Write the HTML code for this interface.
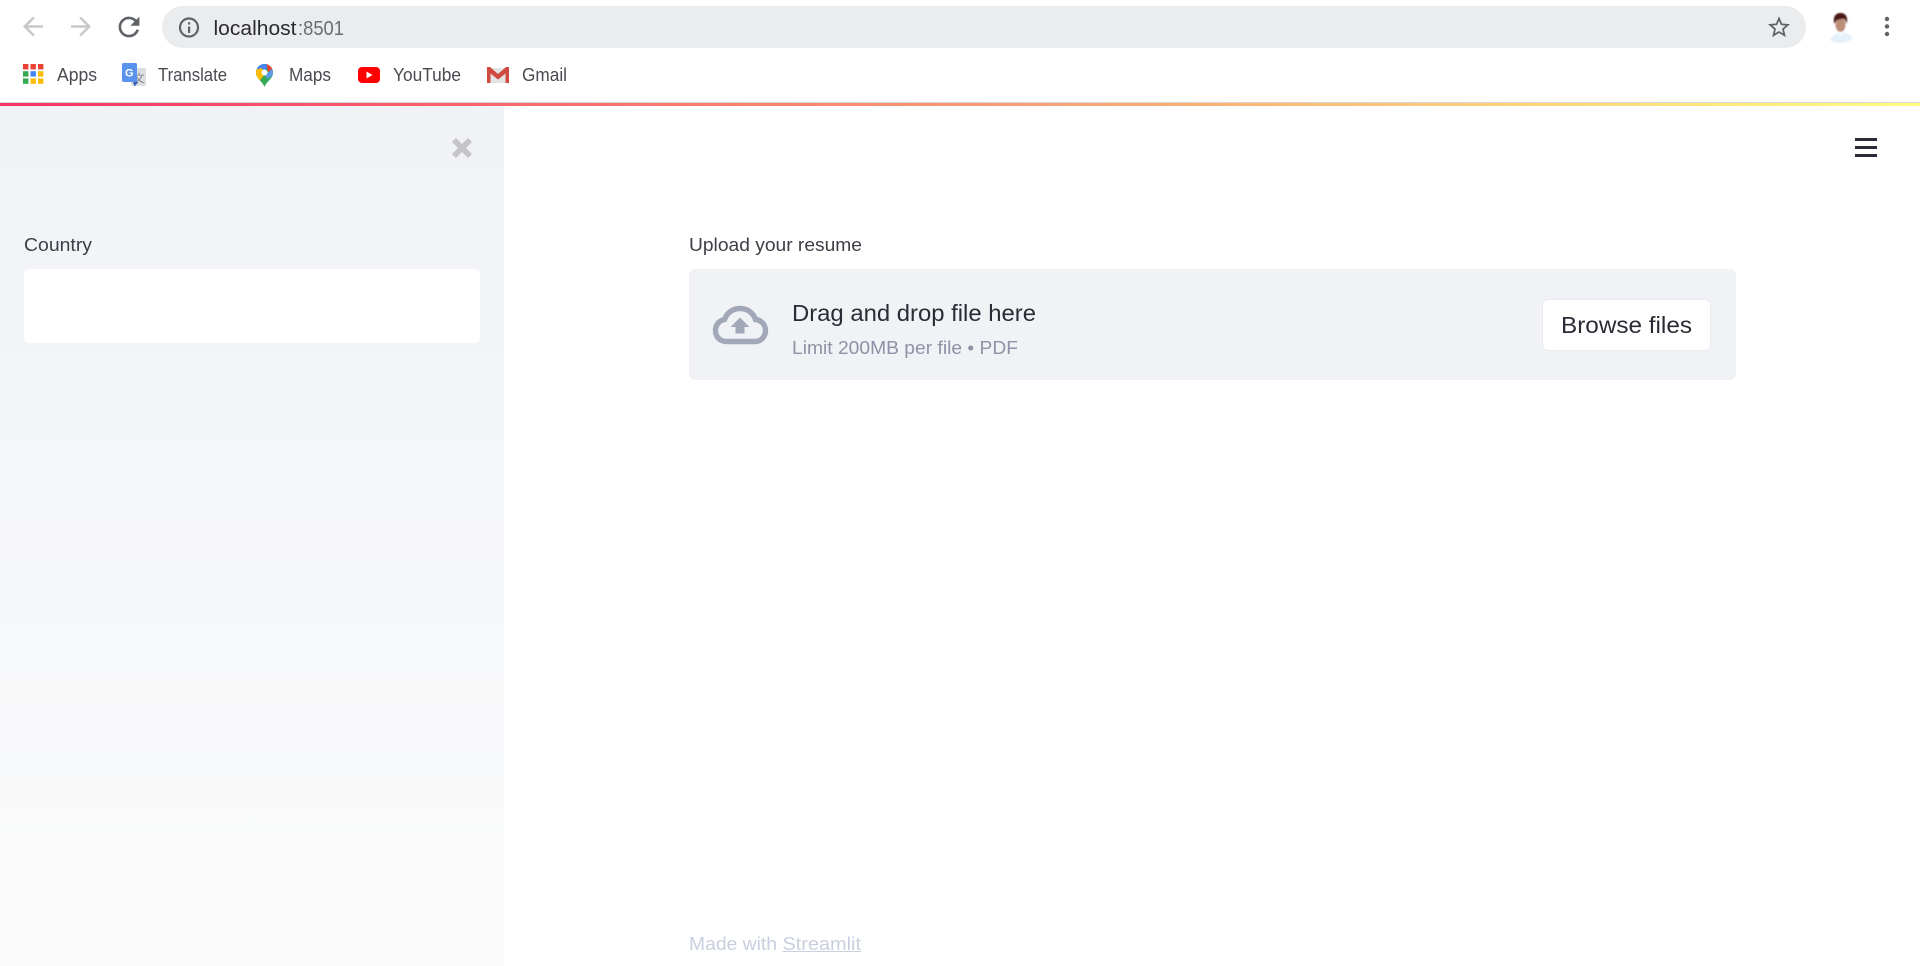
<!DOCTYPE html>
<html lang="en">
<head>
<meta charset="utf-8">
<title>localhost:8501</title>
<style>
html,body{margin:0;padding:0;width:1920px;height:966px;overflow:hidden;background:#fff}
.abs{position:absolute}
#chrome{left:0;top:0;width:1920px;height:102px;background:#fff}
#chromeline{left:0;top:102px;width:1920px;height:1px;background:#d6d6da}
#addr{left:162px;top:6px;width:1644px;height:42px;border-radius:21px;background:#ebecee}
#deco{left:0;top:103px;width:1920px;height:3px;background:linear-gradient(90deg,#f63366,#fffd80)}
#side{left:0;top:106px;width:504px;height:860px;background:linear-gradient(180deg,#f0f2f6,#fbfbfb)}
#input{left:24px;top:269px;width:456px;height:74px;border-radius:6px;background:#fff}
#drop{left:689px;top:269px;width:1047px;height:111px;border-radius:6px;background:#f0f2f6}
#btn{left:1542px;top:299px;width:167px;height:50px;border-radius:6px;background:#fff;border:1px solid #e9ebf0}
svg{position:absolute;left:0;top:0}
text{font-family:"Liberation Sans",sans-serif}
.bm{font-size:18px;fill:#494b50}
.lab{font-size:18.5px;fill:#3d3e47}
.big{font-size:23px;fill:#2a2b34}
.sub{font-size:18.5px;fill:#8d93a5}
.foot{font-size:18.5px;fill:#c9cfdf}
</style>
</head>
<body>
<div class="abs" id="chrome"></div>
<div class="abs" id="chromeline"></div>
<div class="abs" id="addr"></div>
<div class="abs" id="deco"></div>
<div class="abs" id="side"></div>
<div class="abs" id="input"></div>
<div class="abs" id="drop"></div>
<div class="abs" id="btn"></div>

<svg width="1920" height="966" viewBox="0 0 1920 966" xmlns="http://www.w3.org/2000/svg">
<defs>
<clipPath id="pin"><path d="M264.5 64c-4.8 0-8.5 3.8-8.5 8.5 0 6.4 6.4 8.6 8.5 14.5 2.1-5.9 8.5-8.1 8.5-14.5 0-4.7-3.7-8.5-8.5-8.5z"/></clipPath>
<filter id="bl" x="-20%" y="-20%" width="140%" height="140%"><feGaussianBlur stdDeviation="0.7"/></filter>
</defs>

<!-- nav icons -->
<g transform="translate(18,11.5) scale(1.25)" fill="#c6c8ca"><path d="M20 11H7.83l5.59-5.59L12 4l-8 8 8 8 1.41-1.41L7.83 13H20v-2z"/></g>
<g transform="translate(66,11.5) scale(1.25)" fill="#c6c8ca"><path d="M12 4l-1.41 1.41L16.17 11H4v2h12.17l-5.58 5.59L12 20l8-8z"/></g>
<g transform="translate(113.4,11.4) scale(1.3)" fill="#5f6368"><path d="M17.65 6.35A7.958 7.958 0 0 0 12 4c-4.42 0-7.99 3.58-7.99 8s3.57 8 7.99 8c3.73 0 6.84-2.55 7.73-6h-2.08A5.99 5.99 0 0 1 12 18c-3.31 0-6-2.69-6-6s2.69-6 6-6c1.66 0 3.14.69 4.22 1.78L13 11h7V4l-2.35 2.35z"/></g>

<!-- info icon -->
<circle cx="189" cy="27.5" r="9" fill="none" stroke="#5f6368" stroke-width="2.2"/>
<rect x="188" y="26.5" width="2.2" height="6.5" fill="#5f6368"/>
<rect x="188" y="22.3" width="2.2" height="2.2" fill="#5f6368"/>

<text x="213.5" y="35" font-size="20" fill="#2a2b2e" textLength="83" lengthAdjust="spacingAndGlyphs">localhost</text>
<text x="298" y="35" font-size="20" fill="#6a6e73" textLength="46" lengthAdjust="spacingAndGlyphs">:8501</text>

<!-- star -->
<g transform="translate(1765.8,14) scale(1.1)" fill="#5f6368"><path d="M22 9.24l-7.19-.62L12 2 9.19 8.63 2 9.24l5.46 4.73L5.82 21 12 17.27 18.18 21l-1.63-7.03L22 9.24zM12 15.4l-3.76 2.27 1-4.28-3.32-2.88 4.38-.38L12 6.1l1.71 4.04 4.38.38-3.32 2.88 1 4.28L12 15.4z"/></g>

<!-- avatar -->
<g filter="url(#bl)">
<path d="M1830 40c2-4 6-7 10-8h3c4 1 8 3 10 6-3 3-7 5-12 5-4 0-8-1-11-3z" fill="#e3f1fb"/>
<ellipse cx="1840.5" cy="24.5" rx="5" ry="7.5" fill="#bb8e78"/>
<path d="M1834.5 24c-2-7 1-11 6-11s8 4 6 11c-.5-3-1.5-5-3.5-5.500-3 1-6.500 1-7 2.500z" fill="#4a1219"/>
<path d="M1838 32l3 5 3-5z" fill="#f7fbfe"/>
</g>

<!-- menu dots -->
<circle cx="1887" cy="19" r="2.2" fill="#5f6368"/>
<circle cx="1887" cy="26.4" r="2.2" fill="#5f6368"/>
<circle cx="1887" cy="34" r="2.2" fill="#5f6368"/>

<!-- apps grid -->
<g>
<rect x="23" y="64" width="5.4" height="5.4" fill="#ea4335"/><rect x="30.5" y="64" width="5.400" height="5.4" fill="#ea4335"/><rect x="38" y="64" width="5.4" height="5.4" fill="#ea4335"/>
<rect x="23" y="71.2" width="5.4" height="5.4" fill="#34a853"/><rect x="30.5" y="71.2" width="5.4" height="5.4" fill="#4285f4"/><rect x="38" y="71.2" width="5.4" height="5.4" fill="#fbbc05"/>
<rect x="23" y="78.4" width="5.4" height="5.4" fill="#34a853"/><rect x="30.5" y="78.4" width="5.4" height="5.4" fill="#fbbc05"/><rect x="38" y="78.4" width="5.4" height="5.4" fill="#fbbc05"/>
</g>
<text class="bm" x="57" y="81" textLength="40" lengthAdjust="spacingAndGlyphs">Apps</text>

<!-- translate -->
<rect x="131" y="68" width="15" height="18" rx="1.5" fill="#dcdfe2"/>
<text x="133.5" y="82" font-size="11" fill="#7a7f86" style="font-family:'Noto Sans CJK SC',sans-serif">文</text>
<rect x="122" y="63" width="15" height="19" rx="1.5" fill="#5a93ee"/>
<path d="M133 82h5.500l-4 4.500z" fill="#3a62b8"/>
<text x="125" y="76.5" font-size="11" font-weight="bold" fill="#fff">G</text>
<text class="bm" x="158" y="81" textLength="69" lengthAdjust="spacingAndGlyphs">Translate</text>

<!-- maps -->
<g clip-path="url(#pin)">
<rect x="254" y="62" width="22" height="28" fill="#34a853"/>
<path d="M254 62h14v6l-14 10z" fill="#4285f4"/>
<path d="M254 70l8-2 3 6-8 10-3-2z" fill="#fbbc05"/>
<path d="M266 62H276v11l-8-1z" fill="#ea4335"/>
<path d="M273 68l3 6-9 5-2-4z" fill="#5c9be8"/>
</g>
<circle cx="264.5" cy="72.5" r="3" fill="#fff"/>
<text class="bm" x="289" y="81" textLength="42" lengthAdjust="spacingAndGlyphs">Maps</text>

<!-- youtube -->
<rect x="358" y="67" width="22" height="16" rx="4" fill="#f00"/>
<path d="M366.5 71.5v7l6-3.500z" fill="#fff"/>
<text class="bm" x="393" y="81" textLength="68" lengthAdjust="spacingAndGlyphs">YouTube</text>

<!-- gmail -->
<rect x="488" y="68" width="20" height="15" fill="#e4e4e4"/>
<path d="M487 83V67h3l8 7 8-7h3v16h-3.500V73.500l-7.500 6-7.500-6V83z" fill="#cf4a3f"/>
<text class="bm" x="522" y="81" textLength="45" lengthAdjust="spacingAndGlyphs">Gmail</text>

<!-- sidebar close -->
<path d="M454 140l16 16M470 140l-16 16" stroke="#c5c5c8" stroke-width="5.6" fill="none"/>
<text class="lab" x="24" y="251" textLength="68" lengthAdjust="spacingAndGlyphs">Country</text>

<!-- hamburger -->
<rect x="1855" y="138" width="22" height="3" fill="#2a2a38"/>
<rect x="1855" y="146" width="22" height="3" fill="#2a2a38"/>
<rect x="1855" y="154" width="22" height="3" fill="#2a2a38"/>

<!-- uploader -->
<text class="lab" x="689" y="251" textLength="173" lengthAdjust="spacingAndGlyphs">Upload your resume</text>
<path d="M727 341.500C719 341.500 715.500 336 715.500 330.500 715.500 325 719 320.500 724.500 319.500 727 312.500 733 308.500 740 308.500 748 308.500 753.500 313.500 755.500 319.500 761.500 320 765.500 325 765.500 330.500 765.500 336.500 761 341.500 755 341.500Z" fill="none" stroke="#a3a8b8" stroke-width="5.400"/>
<path d="M740 317.500l9.500 9.500H744.500v6.500h-9V327H730.500z" fill="#a3a8b8"/>
<text class="big" x="792" y="321" textLength="244" lengthAdjust="spacingAndGlyphs">Drag and drop file here</text>
<text class="sub" x="792" y="354" textLength="226" lengthAdjust="spacingAndGlyphs">Limit 200MB per file • PDF</text>
<text class="big" x="1561" y="333" textLength="131" lengthAdjust="spacingAndGlyphs">Browse files</text>

<!-- footer -->
<text class="foot" x="689" y="950" textLength="88" lengthAdjust="spacingAndGlyphs">Made with</text>
<text class="foot" x="782.500" y="950" textLength="78.500" lengthAdjust="spacingAndGlyphs">Streamlit</text>
<rect x="782.500" y="951" width="78.500" height="1" fill="#c9cfdf"/>
</svg>
</body>
</html>
